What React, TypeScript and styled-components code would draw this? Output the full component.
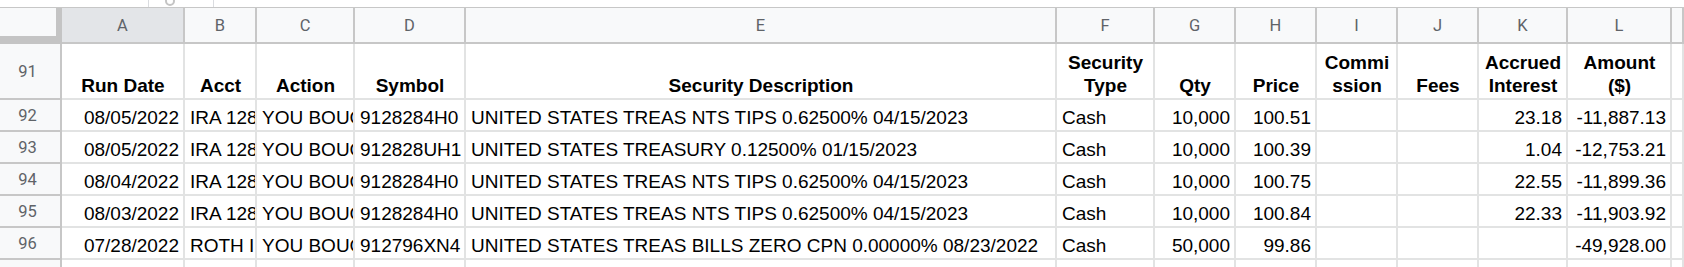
import React from 'react';
import styled, { createGlobalStyle, css } from 'styled-components';

const GlobalStyle = createGlobalStyle`
  html, body { margin: 0; padding: 0; background: #ffffff; }
  body { font-family: "Liberation Sans", Arial, sans-serif; }
`;

const COLS = '62px 123px 72px 98px 111px 591px 98px 81px 81px 81px 81px 89px 104px 1fr';

const HEAD_LINE = '#c7c7c7';
const GRID_LINE = '#e2e3e3';

const Sheet = styled.div`
  width: 1684px;
  height: 267px;
  overflow: hidden;
  background: #ffffff;
`;

const TopStrip = styled.div`
  height: 7px;
  display: flex;
`;

const FormulaTab = styled.div`
  margin-left: 148px;
  width: 64px;
  height: 7px;
  border-left: 1px solid #dadce0;
  border-right: 1px solid #dadce0;
  overflow: hidden;
`;

const TabGlyph = styled.div`
  width: 6px;
  height: 6px;
  margin: -4px 0 0 16px;
  border: 2px solid #c4c4c4;
  border-radius: 50%;
`;

const HeaderRow = styled.div`
  display: grid;
  grid-template-columns: ${COLS};
  height: 37px;
  box-sizing: border-box;
  border-top: 1px solid ${HEAD_LINE};
`;

const Corner = styled.div`
  box-sizing: border-box;
  background: #f8f9fa;
  border-right: 6px solid #c4c4c4;
  border-bottom: 8px solid #c4c4c4;
`;

const ColHeader = styled.div<{ $active?: boolean }>`
  box-sizing: border-box;
  background: ${(p) => (p.$active ? '#e3e5e8' : '#f8f9fa')};
  border-right: 2px solid ${HEAD_LINE};
  border-bottom: 2px solid ${HEAD_LINE};
  display: flex;
  align-items: center;
  justify-content: center;
  font-family: Roboto, "Liberation Sans", Arial, sans-serif;
  font-size: 16.5px;
  color: #5f6368;
`;

const Row = styled.div<{ $tall?: boolean }>`
  display: grid;
  grid-template-columns: ${COLS};
  height: ${(p) => (p.$tall ? '56px' : '32px')};
`;

const RowHeader = styled.div`
  box-sizing: border-box;
  background: #f8f9fa;
  border-right: 2px solid ${HEAD_LINE};
  border-bottom: 2px solid ${HEAD_LINE};
  display: flex;
  align-items: center;
  justify-content: center;
  padding-right: 5px;
  font-family: Roboto, "Liberation Sans", Arial, sans-serif;
  font-size: 16.5px;
  color: #5f6368;
`;

type Align = 'left' | 'right' | 'center';

const Cell = styled.div<{ $align?: Align; $head?: boolean }>`
  box-sizing: border-box;
  min-width: 0;
  border-right: 2px solid ${GRID_LINE};
  border-bottom: 2px solid ${GRID_LINE};
  padding: 0 4px 1px 5px;
  display: flex;
  align-items: flex-end;
  justify-content: ${(p) =>
    p.$align === 'right' ? 'flex-end' : p.$align === 'center' ? 'center' : 'flex-start'};
  overflow: hidden;
  font-size: 19px;
  line-height: 23px;
  color: #000000;
  white-space: nowrap;
  ${(p) =>
    p.$head &&
    css`
      font-weight: 700;
      white-space: normal;
      overflow-wrap: anywhere;
      text-align: center;
    `}
`;

const CellText = styled.span`
  display: block;
  min-width: 0;
  overflow: hidden;
  text-overflow: clip;
  margin-right: -4px;
  padding-right: 4px;
`;

const LETTERS = ['A', 'B', 'C', 'D', 'E', 'F', 'G', 'H', 'I', 'J', 'K', 'L', ''];

const HEADINGS = [
  'Run Date',
  'Acct',
  'Action',
  'Symbol',
  'Security Description',
  'Security Type',
  'Qty',
  'Price',
  'Commission',
  'Fees',
  'Accrued Interest',
  'Amount ($)',
  '',
];

const ALIGN: Align[] = [
  'right',
  'left',
  'left',
  'left',
  'left',
  'left',
  'right',
  'right',
  'right',
  'right',
  'right',
  'right',
  'left',
];

const TIPS = 'UNITED STATES TREAS NTS TIPS 0.62500% 04/15/2023';

const ROWS: { n: number; cells: string[] }[] = [
  {
    n: 92,
    cells: ['08/05/2022', 'IRA 128', 'YOU BOUGHT', '9128284H0', TIPS, 'Cash', '10,000', '100.51', '', '', '23.18', '-11,887.13', ''],
  },
  {
    n: 93,
    cells: ['08/05/2022', 'IRA 128', 'YOU BOUGHT', '912828UH1', 'UNITED STATES TREASURY 0.12500% 01/15/2023', 'Cash', '10,000', '100.39', '', '', '1.04', '-12,753.21', ''],
  },
  {
    n: 94,
    cells: ['08/04/2022', 'IRA 128', 'YOU BOUGHT', '9128284H0', TIPS, 'Cash', '10,000', '100.75', '', '', '22.55', '-11,899.36', ''],
  },
  {
    n: 95,
    cells: ['08/03/2022', 'IRA 128', 'YOU BOUGHT', '9128284H0', TIPS, 'Cash', '10,000', '100.84', '', '', '22.33', '-11,903.92', ''],
  },
  {
    n: 96,
    cells: ['07/28/2022', 'ROTH IRA', 'YOU BOUGHT', '912796XN4', 'UNITED STATES TREAS BILLS ZERO CPN 0.00000% 08/23/2022', 'Cash', '50,000', '99.86', '', '', '', '-49,928.00', ''],
  },
  { n: 97, cells: ['', '', '', '', '', '', '', '', '', '', '', '', ''] },
];

export default function App() {
  return (
    <>
      <GlobalStyle />
      <Sheet>
        <TopStrip>
          <FormulaTab>
            <TabGlyph />
          </FormulaTab>
        </TopStrip>
        <HeaderRow>
          <Corner />
          {LETTERS.map((l, i) => (
            <ColHeader key={i} $active={l === 'A'}>
              {l}
            </ColHeader>
          ))}
        </HeaderRow>
        <Row $tall>
          <RowHeader>91</RowHeader>
          {HEADINGS.map((h, i) => (
            <Cell key={i} $head $align="center">
              {h}
            </Cell>
          ))}
        </Row>
        {ROWS.map((r) => (
          <Row key={r.n}>
            <RowHeader>{r.n}</RowHeader>
            {r.cells.map((c, i) => (
              <Cell key={i} $align={ALIGN[i]}>
                {c && <CellText>{c}</CellText>}
              </Cell>
            ))}
          </Row>
        ))}
      </Sheet>
    </>
  );
}
